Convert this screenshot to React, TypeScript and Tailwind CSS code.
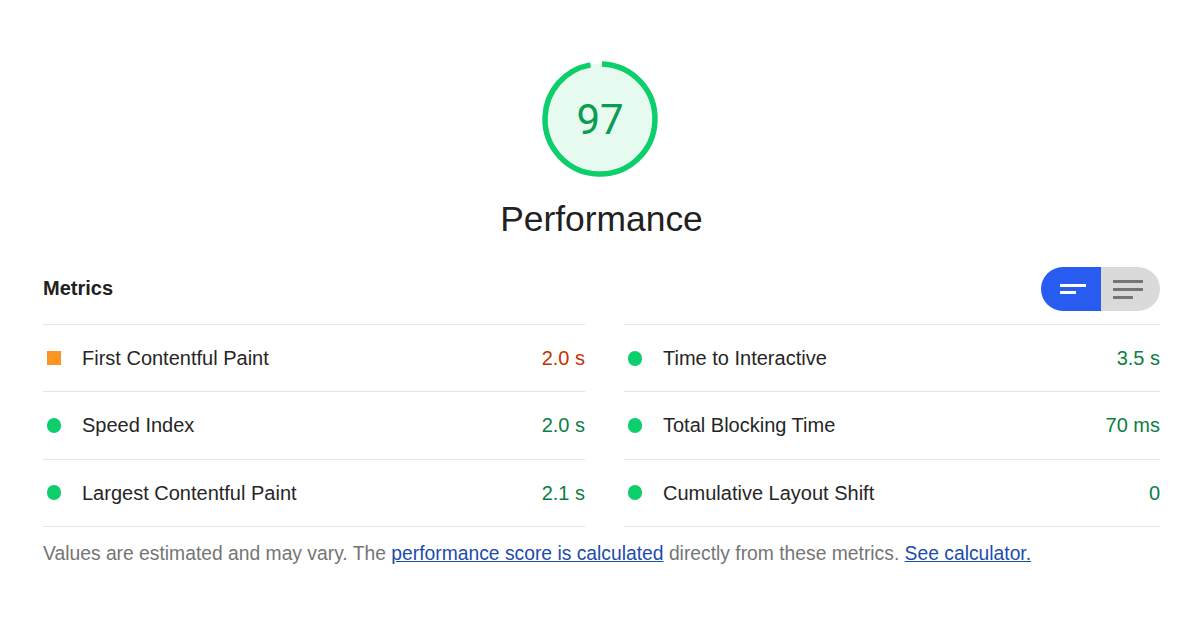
import React from "react";

type Metric = { name: string; value: string; status: "pass" | "average" };

const left: Metric[] = [
  { name: "First Contentful Paint", value: "2.0 s", status: "average" },
  { name: "Speed Index", value: "2.0 s", status: "pass" },
  { name: "Largest Contentful Paint", value: "2.1 s", status: "pass" },
];
const right: Metric[] = [
  { name: "Time to Interactive", value: "3.5 s", status: "pass" },
  { name: "Total Blocking Time", value: "70 ms", status: "pass" },
  { name: "Cumulative Layout Shift", value: "0", status: "pass" },
];

function Gauge() {
  const r = 55;
  const c = 2 * Math.PI * r;
  const arc = c * 0.965;
  return (
    <div className="relative w-[118px] h-[118px]">
      <svg width="118" height="118" viewBox="0 0 118 118">
        <circle cx="59" cy="59" r={r} fill="#e7faf0" />
        <circle
          cx="59"
          cy="59"
          r={r}
          fill="none"
          stroke="#0cce6b"
          strokeWidth="5.5"
          strokeDasharray={`${arc} ${c}`}
          transform="rotate(-88 59 59)"
        />
      </svg>
      <div className="absolute inset-0 flex items-center justify-center text-[42px] text-[#0a9d52] font-['Roboto',sans-serif] leading-none pt-[1px]">
        97
      </div>
    </div>
  );
}

function Column({ items, widthClass }: { items: Metric[]; widthClass: string }) {
  return (
    <div className={`${widthClass} border-b border-[#e4e4e4]`}>
      {items.map((m) => (
        <div key={m.name} className="h-[67.3px] border-t border-[#e4e4e4] flex items-center">
          <div className="w-[14px] ml-[4px] flex items-center justify-center">
            {m.status === "average" ? (
              <div className="w-[14px] h-[14px] bg-[#fa9423]" />
            ) : (
              <div className="w-[15px] h-[15px] rounded-full bg-[#0cce6b]" />
            )}
          </div>
          <div className="ml-[21px] flex-1 text-[20px] text-[#262626]">{m.name}</div>
          <div
            className={`text-[20px] ${m.status === "average" ? "text-[#c33300]" : "text-[#0b8043]"}`}
          >
            {m.value}
          </div>
        </div>
      ))}
    </div>
  );
}

export default function App() {
  return (
    <div className="w-[1200px] h-[630px] bg-white font-['Liberation_Sans',Arial,sans-serif] overflow-hidden">
      <div className="pt-[60px] flex flex-col items-center">
        <Gauge />
        <div className="mt-[21px] ml-[3px] text-[35.4px] leading-[40px] text-[#212121]">Performance</div>
      </div>
      <div className="ml-[43px] w-[1117px] mt-[28px]">
        <div className="flex items-center justify-between h-[44px]">
          <div className="text-[20px] font-bold text-[#212121] -mt-[3px]">Metrics</div>
          <div className="flex h-[44px] rounded-full overflow-hidden">
            <div className="w-[60px] bg-[#285cf0] flex flex-col justify-center pl-[19px] gap-[4px]">
              <div className="w-[26px] h-[3px] bg-white" />
              <div className="w-[16px] h-[3px] bg-white" />
            </div>
            <div className="w-[59px] bg-[#dadada] flex flex-col justify-center pl-[12px] gap-[5px]">
              <div className="w-[30px] h-[3px] bg-[#757575]" />
              <div className="w-[30px] h-[3px] bg-[#757575]" />
              <div className="w-[20px] h-[3px] bg-[#757575]" />
            </div>
          </div>
        </div>
        <div className="mt-[13px] flex justify-between">
          <Column items={left} widthClass="w-[542px]" />
          <Column items={right} widthClass="w-[536px]" />
        </div>
        <div className="mt-[16px] text-[19.3px] leading-[22px] text-[#757575]">
          Values are estimated and may vary. The{" "}
          <span className="text-[#1c4bae] underline">performance score is calculated</span> directly
          from these metrics. <span className="text-[#1c4bae] underline">See calculator.</span>
        </div>
      </div>
    </div>
  );
}
